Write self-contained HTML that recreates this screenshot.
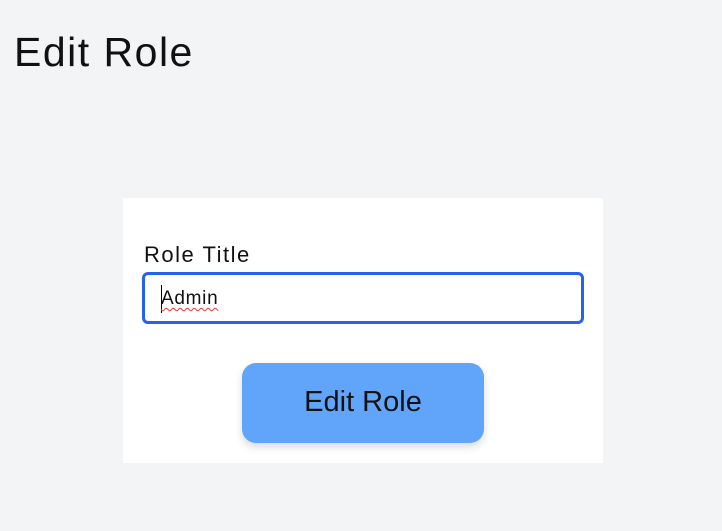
<!DOCTYPE html>
<html><head><style>
html,body{margin:0;padding:0;background:#f3f4f6;width:722px;height:531px;overflow:hidden;font-family:"Liberation Sans",sans-serif;color:#111;}
h1{position:absolute;left:14px;top:27px;margin:0;font-weight:400;font-size:41px;line-height:50px;letter-spacing:1.5px;}
.card{position:absolute;left:123px;top:198px;width:480px;height:265px;background:#fff;}
.label{position:absolute;left:21px;top:43px;font-size:22px;line-height:28px;letter-spacing:1.5px;}
.input{position:absolute;left:19px;top:74px;width:436px;height:46px;border:3px solid #2563eb;border-radius:6px;background:#fff;}
.input span{position:absolute;left:16px;top:11px;font-size:19px;line-height:26px;letter-spacing:0.7px;text-decoration:underline wavy #e33;text-decoration-thickness:1px;text-underline-offset:3px;}
.caret{position:absolute;left:16px;top:10px;width:1px;height:28px;background:#000;}
.btn{position:absolute;left:119px;top:165px;width:242px;height:80px;background:#60a5fa;border-radius:14px;box-shadow:0 4px 8px rgba(0,0,0,0.15);text-align:center;line-height:78px;font-size:29px;}
</style></head><body>
<h1>Edit Role</h1>
<div class="card">
<div class="label">Role Title</div>
<div class="input"><div class="caret"></div><span>Admin</span></div>
<div class="btn">Edit Role</div>
</div>
</body></html>
